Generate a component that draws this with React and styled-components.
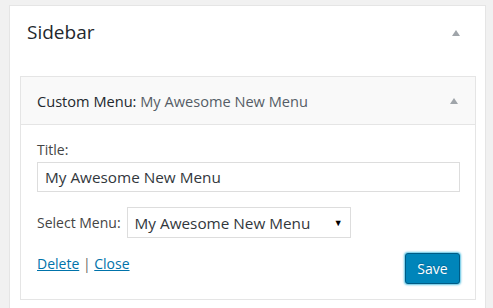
import React from 'react';
import styled, { createGlobalStyle } from 'styled-components';

const Global = createGlobalStyle`
  html, body {
    margin: 0;
    padding: 0;
    background: #f1f1f1;
    font-family: "Open Sans", "Liberation Sans", sans-serif;
    color: #444;
  }
`;

const Page = styled.div`
  height: 308px;
  overflow: hidden;
  padding: 5px 0 0 9px;
  box-sizing: border-box;
`;

const SidebarBox = styled.div`
  width: 477px;
  height: 320px;
  box-sizing: border-box;
  background: #fff;
  border: 1px solid #e5e5e5;
  padding: 0 9px 0 10px;
`;

const SidebarHead = styled.div`
  height: 70px;
  display: flex;
  align-items: flex-start;
  justify-content: space-between;
  padding: 12px 16px 0 7px;
  box-sizing: border-box;
`;

const SidebarTitle = styled.h2`
  margin: 0;
  font-size: 19px;
  font-weight: 400;
  color: #23282d;
  line-height: 28px;
`;

const Toggle = styled.span`
  width: 0;
  height: 0;
  margin-top: ${(p) => p.$top || 0}px;
  border-left: 4px solid transparent;
  border-right: 4px solid transparent;
  border-bottom: 6px solid #a0a5aa;
`;

const Widget = styled.div`
  border: 1px solid #e5e5e5;
  background: #fff;
`;

const WidgetTop = styled.div`
  height: 47px;
  background: #f9f9f9;
  border-bottom: 1px solid #e5e5e5;
  display: flex;
  align-items: center;
  justify-content: space-between;
  padding: 0 17px 0 16px;
`;

const WidgetTitle = styled.h3`
  margin: 0;
  font-size: 14.6px;
  font-weight: 400;
  color: #23282d;
`;

const InTitle = styled.span`
  color: #555d66;
`;

const WidgetInside = styled.div`
  padding: 15px 15px 15px 16px;
`;

const Label = styled.label`
  display: block;
  font-size: 14px;
  color: #444;
  line-height: 20px;
`;

const TextInput = styled.input`
  display: block;
  width: 100%;
  box-sizing: border-box;
  height: 30px;
  margin: 2px 0 0;
  padding: 0 7px;
  border: 1px solid #ddd;
  font-family: inherit;
  font-size: 15.3px;
  color: #32373c;
  outline: none;
`;

const SelectRow = styled.div`
  display: flex;
  align-items: center;
  gap: 6px;
  margin-top: 15px;
`;

const Select = styled.div`
  width: 224px;
  height: 31px;
  box-sizing: border-box;
  border: 1px solid #ddd;
  display: flex;
  align-items: center;
  justify-content: space-between;
  padding: 0 7px 0 7px;
  font-size: 15.3px;
  color: #32373c;
`;

const Caret = styled.span`
  font-size: 9px;
  color: #000;
`;

const Actions = styled.div`
  display: flex;
  justify-content: space-between;
  align-items: flex-start;
  margin-top: 14px;
`;

const Links = styled.div`
  font-size: 14px;
  color: #666;
  padding-top: 2px;
`;

const Link = styled.a`
  color: #0073aa;
  text-decoration: underline;
`;

const SaveButton = styled.button`
  height: 31px;
  width: 55px;
  margin-top: 1px;
  background: #0085ba;
  border: 1px solid #005b85;
  border-radius: 3px;
  box-shadow: 0 0 2px 1px rgba(51, 179, 219, 0.8);
  color: #fff;
  font-family: inherit;
  font-size: 14px;
  text-shadow: 0 -1px 1px #006799;
`;

export default function App() {
  return (
    <Page>
      <Global />
      <SidebarBox>
        <SidebarHead>
          <SidebarTitle>Sidebar</SidebarTitle>
          <Toggle $top={12} />
        </SidebarHead>
        <Widget>
          <WidgetTop>
            <WidgetTitle>
              Custom Menu: <InTitle>My Awesome New Menu</InTitle>
            </WidgetTitle>
            <Toggle />
          </WidgetTop>
          <WidgetInside>
            <Label>Title:</Label>
            <TextInput defaultValue="My Awesome New Menu" />
            <SelectRow>
              <Label as="span">Select Menu:</Label>
              <Select>
                My Awesome New Menu
                <Caret>▼</Caret>
              </Select>
            </SelectRow>
            <Actions>
              <Links>
                <Link href="#">Delete</Link> | <Link href="#">Close</Link>
              </Links>
              <SaveButton>Save</SaveButton>
            </Actions>
          </WidgetInside>
        </Widget>
      </SidebarBox>
    </Page>
  );
}
